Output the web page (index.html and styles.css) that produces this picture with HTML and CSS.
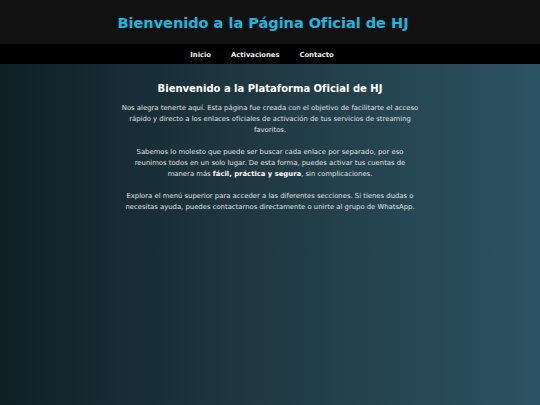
FILE: index.html
```html
<!DOCTYPE html>
<html lang="es">
<head>
<meta charset="utf-8">
<title>HJ</title>
<link rel="stylesheet" href="styles.css">
</head>
<body>
<header class="site-header">
  <h1 class="site-title">Bienvenido a la Página Oficial de HJ</h1>
</header>
<nav class="site-nav">
  <a href="#" class="nav-link">Inicio</a>
  <a href="#" class="nav-link">Activaciones</a>
  <a href="#" class="nav-link">Contacto</a>
</nav>
<main class="content">
  <h2 class="content-title">Bienvenido a la Plataforma Oficial de HJ</h2>
  <p class="text">Nos alegra tenerte aquí. Esta página fue creada con el objetivo de facilitarte el acceso rápido y directo a los enlaces oficiales de activación de tus servicios de streaming favoritos.</p>
  <p class="text">Sabemos lo molesto que puede ser buscar cada enlace por separado, por eso reunimos todos en un solo lugar. De esta forma, puedes activar tus cuentas de<br>manera más <strong>fácil, práctica y segura</strong>, sin complicaciones.</p>
  <p class="text">Explora el menú superior para acceder a las diferentes secciones. Si tienes dudas o necesitas ayuda, puedes contactarnos directamente o unirte al grupo de WhatsApp.</p>
</main>
</body>
</html>
```
FILE: styles.css
```css
html, body {
  margin: 0;
  padding: 0;
  height: 100%;
}
body {
  font-family: "DejaVu Sans", Verdana, sans-serif;
  background: linear-gradient(to right, #0f2027, #203a43, #2c5364);
  color: #e6e6e6;
}
.site-header {
  background: #111111;
  height: 42px;
  display: flex;
  align-items: center;
  justify-content: center;
  padding: 2px 14px 0 0;
}
.site-title {
  margin: 0;
  font-size: 14.5px;
  font-weight: bold;
  color: #1cb8e0;
}
.site-nav {
  background: #000000;
  height: 19px;
  display: flex;
  align-items: center;
  justify-content: center;
  gap: 20px;
  padding: 1px 16px 0 0;
}
.nav-link {
  color: #f0f0f0;
  text-decoration: none;
  font-size: 6.8px;
  font-weight: bold;
}
.content {
  width: 300px;
  margin: 0 auto;
  padding-top: 19px;
  text-align: center;
}
.content-title {
  margin: 0 0 8px;
  font-size: 10px;
  line-height: 12px;
  font-weight: bold;
  color: #ffffff;
}
.text {
  margin: 0 0 11px;
  font-size: 6.85px;
  line-height: 11px;
  color: #e0e0e0;
}
.text strong {
  color: #ffffff;
}
```
